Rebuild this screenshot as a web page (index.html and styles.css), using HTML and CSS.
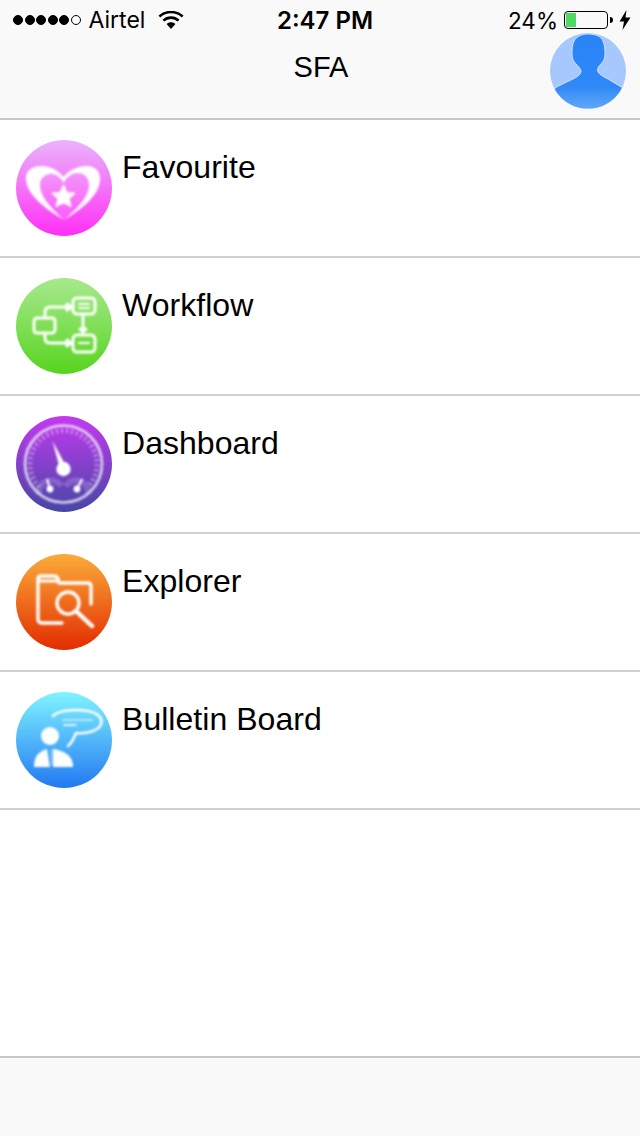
FILE: index.html
```html
<!DOCTYPE html>
<html lang="en">
<head>
  <meta charset="UTF-8">
  <meta name="viewport" content="width=device-width, initial-scale=1.0">
  <title>SFA</title>
  <link rel="stylesheet" href="styles.css">
</head>
<body>
  <div class="app">
    <header class="top">
      <div class="status">
        <div class="status-left">
          <span class="dots"><i></i><i></i><i></i><i></i><i></i><i class="off"></i></span>
          <span class="carrier">Airtel</span>
          <svg class="wifi" width="26" height="18" viewBox="0 0 26 18">
            <path d="M13 18 L8.6 13 C11 10.8 15 10.8 17.4 13 Z" fill="#000"/>
            <path d="M5.4 9.6 C9.6 5.6 16.4 5.6 20.6 9.6" fill="none" stroke="#000" stroke-width="2.6"/>
            <path d="M1.4 5.4 C8 -0.4 18 -0.4 24.6 5.4" fill="none" stroke="#000" stroke-width="2.6"/>
          </svg>
        </div>
        <div class="clock">2:47 PM</div>
        <div class="status-right">
          <span class="percent">24%</span>
          <span class="battery"><span class="battery-level"></span></span>
          <span class="battery-nub"></span>
          <svg class="bolt" width="12" height="20" viewBox="0 0 12 20">
            <path d="M7.5 0 L0.5 11.5 H5 L3.5 20 L11.5 7.5 H6.5 Z" fill="#000"/>
          </svg>
        </div>
      </div>
      <div class="nav">
        <h1>SFA</h1>
      </div>
      <svg class="avatar" width="76" height="76" viewBox="0 0 76 76">
        <defs>
          <clipPath id="avatarClip"><circle cx="38" cy="38" r="38"/></clipPath>
          <linearGradient id="avatarBody" x1="0" y1="0" x2="0" y2="1">
            <stop offset="0" stop-color="#2a84f8"/>
            <stop offset="0.7" stop-color="#2f88f6"/>
            <stop offset="1" stop-color="#62a8f8"/>
          </linearGradient>
        </defs>
        <circle cx="38" cy="38" r="38" fill="#a6c8fe"/>
        <path clip-path="url(#avatarClip)" d="M38 1 C45 1 51 3 53 8 C55 12 55 18 55 22 C55 26 53 29 50 32 C48 34 47 36 48 39 C50 42 54 44 58 46 C63 49 68 52 73 55 L76 76 L0 76 L5 55 C10 52 17 49 23 46 C27 44 30 42 31 39 C31 36 29 34 27 32 C24 29 22 26 22 22 C22 17 22 12 24 8 C27 3 32 1 38 1 Z" fill="url(#avatarBody)" stroke="#cfe0fb" stroke-width="1"/>
      </svg>
    </header>

    <main class="menu">
      <div class="row">
        <span class="icon icon-favourite">
          <svg width="96" height="96" viewBox="0 0 96 96">
            <path fill="#fff" opacity="0.12" d="M48 80 C38 70 24 58 24 45 C24 37 31 33 37 34 C42 35 46 39 47.5 43 C50 38 55 33 62 33 C69 33 73 38 73 45 C73 58 58 71 48 80 Z"/>
            <path fill-rule="evenodd" fill="#fff" d="M48 80 C32 70 10 56 10 38 C10 30 17 26 25 26 C34 26 42 30 47.5 37 C53 30 62 26 71 26 C79 26 84 31 84 39 C84 56 64 70 48 80 Z M48 80 C38 70 24 58 24 45 C24 37 31 33 37 34 C42 35 46 39 47.5 43 C50 38 55 33 62 33 C69 33 73 38 73 45 C73 58 58 71 48 80 Z"/>
            <path fill="#fff" d="M47.5 46 L50.5 53 L58 53.5 L52.5 58.5 L54.5 66 L47.5 62 L40.5 66 L42.5 58.5 L37 53.5 L44.5 53 Z" stroke="#fff" stroke-width="2" stroke-linejoin="round"/>
          </svg>
        </span>
        <span class="label">Favourite</span>
      </div>
      <div class="row">
        <span class="icon icon-workflow">
          <svg width="96" height="96" viewBox="0 0 96 96" fill="none" stroke="#fff" stroke-width="3" stroke-linecap="round" stroke-linejoin="round">
            <rect x="18" y="40" width="21" height="15" rx="3"/>
            <rect x="57" y="20" width="22" height="16" rx="4"/>
            <rect x="57" y="57" width="22" height="17" rx="4"/>
            <path d="M63 26 H73 M63 30 H73 M63 65 H73" stroke-width="2.2"/>
            <path d="M29 40 V34 Q29 29 34 29 H50"/>
            <path d="M29 55 V60 Q29 65 34 65 H50"/>
            <path d="M67 36 V50"/>
            <path d="M51 26 L55 29 L51 32 Z M51 62 L55 65 L51 68 Z M64 51 L67 54 L70 51 Z" fill="#fff"/>
          </svg>
        </span>
        <span class="label">Workflow</span>
      </div>
      <div class="row">
        <span class="icon icon-dashboard">
          <svg width="96" height="96" viewBox="0 0 96 96" fill="none" stroke="#fff">
            <circle cx="47.5" cy="48" r="38.5" stroke-width="2.6" opacity="0.75"/>
            <path d="M23 71 A33.5 33.5 0 1 1 72 71" stroke-width="5" stroke-dasharray="2 3" opacity="0.4"/>
            <path d="M23 78 A12 12 0 0 1 45 70 M50 70 A12 12 0 0 1 72 78" stroke-width="6" stroke-dasharray="1.5 1.5" opacity="0.35"/>
            <path d="M36.5 25 L44 53 L51 52 Z" fill="#fff" stroke="none"/>
            <circle cx="47.5" cy="53" r="7.2" fill="#fff" stroke="none"/>
            <path d="M31 63 L34 73 M66 63 L61 73" stroke-width="2"/>
            <circle cx="34" cy="73" r="3.4" fill="#fff" stroke="none"/>
            <circle cx="61" cy="73" r="3.4" fill="#fff" stroke="none"/>
          </svg>
        </span>
        <span class="label">Dashboard</span>
      </div>
      <div class="row">
        <span class="icon icon-explorer">
          <svg width="96" height="96" viewBox="0 0 96 96" fill="none" stroke="#fff" stroke-width="3.4" stroke-linecap="round" stroke-linejoin="round">
            <path d="M46 69 H26 Q22 69 22 65 V25 Q22 22 25 22 H38 Q41 22 42 25 L43 29 H72 Q75 29 75 32 V50"/>
            <path d="M23 27 H42" stroke-width="3"/>
            <circle cx="52" cy="49" r="11"/>
            <path d="M60 57 L76 72" stroke-width="4.4"/>
          </svg>
        </span>
        <span class="label">Explorer</span>
      </div>
      <div class="row">
        <span class="icon icon-bulletin">
          <svg width="96" height="96" viewBox="0 0 96 96" fill="none" stroke="#fff" stroke-linecap="round" stroke-linejoin="round">
            <path d="M37 24 C42 18 60 17 72 19 C82 21 87 26 85 32 C83 39 70 42 60 41 C58 46 56 51 52 54" stroke-width="2.6"/>
            <path d="M47 28 H76" stroke-width="1.6" opacity="0.7"/>
            <path d="M48 33 H60" stroke-width="1.8" opacity="0.8"/>
            <circle cx="34" cy="44" r="9" fill="#fff" stroke="none"/>
            <path d="M18 75 C18 66 21 60 31 57 L34 75 Z M57 75 C57 66 53 60 37 57 L37 75 Z" fill="#fff" stroke="none"/>
            <path d="M35.5 58 V73" stroke-width="1" opacity="0.7"/>
          </svg>
        </span>
        <span class="label">Bulletin Board</span>
      </div>
    </main>

    <footer class="bottom"></footer>
  </div>
</body>
</html>
```

FILE: styles.css
```css
html, body {
  margin: 0;
  padding: 0;
}
body {
  font-family: 'Liberation Sans', Arial, sans-serif;
  background: #fff;
  color: #000;
}
.app {
  width: 640px;
  height: 1136px;
  display: flex;
  flex-direction: column;
  overflow: hidden;
}
.top {
  position: relative;
  background: #f9f9f9;
  border-bottom: 2px solid #c8c8c8;
}
.status {
  height: 40px;
  display: flex;
  align-items: center;
  justify-content: space-between;
  padding: 0 9px 0 13px;
  font-family: Inter, 'Liberation Sans', sans-serif;
  font-size: 23px;
  position: relative;
}
.status-left, .status-right {
  display: flex;
  align-items: center;
}
.dots {
  display: flex;
  gap: 1.5px;
}
.dots i {
  width: 8px;
  height: 8px;
  border: 1px solid #000;
  border-radius: 50%;
  background: #000;
  box-sizing: content-box;
}
.dots i.off {
  background: transparent;
}
.carrier {
  margin-left: 8px;
}
.wifi {
  margin-left: 13px;
  margin-top: -1px;
}
.clock {
  position: absolute;
  left: 277px;
  font-size: 24px;
  font-weight: 600;
}
.percent {
  font-size: 22.5px;
}
.battery {
  width: 44px;
  height: 18px;
  margin-left: 6px;
  border: 1px solid #000;
  border-radius: 4px;
  box-sizing: border-box;
  padding: 1px;
  display: block;
}
.battery-level {
  display: block;
  width: 10px;
  height: 14px;
  background: #4cd964;
}
.battery-nub {
  width: 3px;
  height: 6px;
  margin-left: 2px;
  background: #000;
  border-radius: 0 3px 3px 0;
}
.bolt {
  margin-left: 6px;
}
.nav {
  height: 78px;
  display: flex;
  align-items: flex-start;
  justify-content: center;
}
.nav h1 {
  margin: 8px 0 0 2px;
  font-size: 29px;
  font-weight: 400;
  line-height: 38px;
}
.avatar {
  position: absolute;
  left: 550px;
  top: 33px;
}
.menu {
  flex: 1;
}
.row {
  height: 116px;
  border-bottom: 2px solid #d0d0d0;
  display: flex;
  align-items: flex-start;
  padding: 20px 0 0 16px;
}
.icon {
  width: 96px;
  height: 96px;
  border-radius: 50%;
  display: block;
  flex-shrink: 0;
}
.icon svg {
  display: block;
  filter: blur(1px);
}
.icon-favourite { background: linear-gradient(#eab4fb, #ff2ff5); }
.icon-workflow { background: linear-gradient(#a8e98e, #57d41f); }
.icon-dashboard { background: linear-gradient(#c439f0, #4547a5); }
.icon-explorer { background: linear-gradient(#fbab3a, #e22d00); }
.icon-bulletin { background: linear-gradient(#80f4ff, #2279f2); }
.label {
  margin: 8px 0 0 10px;
  font-size: 32px;
  line-height: 38px;
  letter-spacing: 0.04px;
}
.bottom {
  height: 78px;
  background: #f9f9f9;
  border-top: 2px solid #c8c8c8;
}
```
